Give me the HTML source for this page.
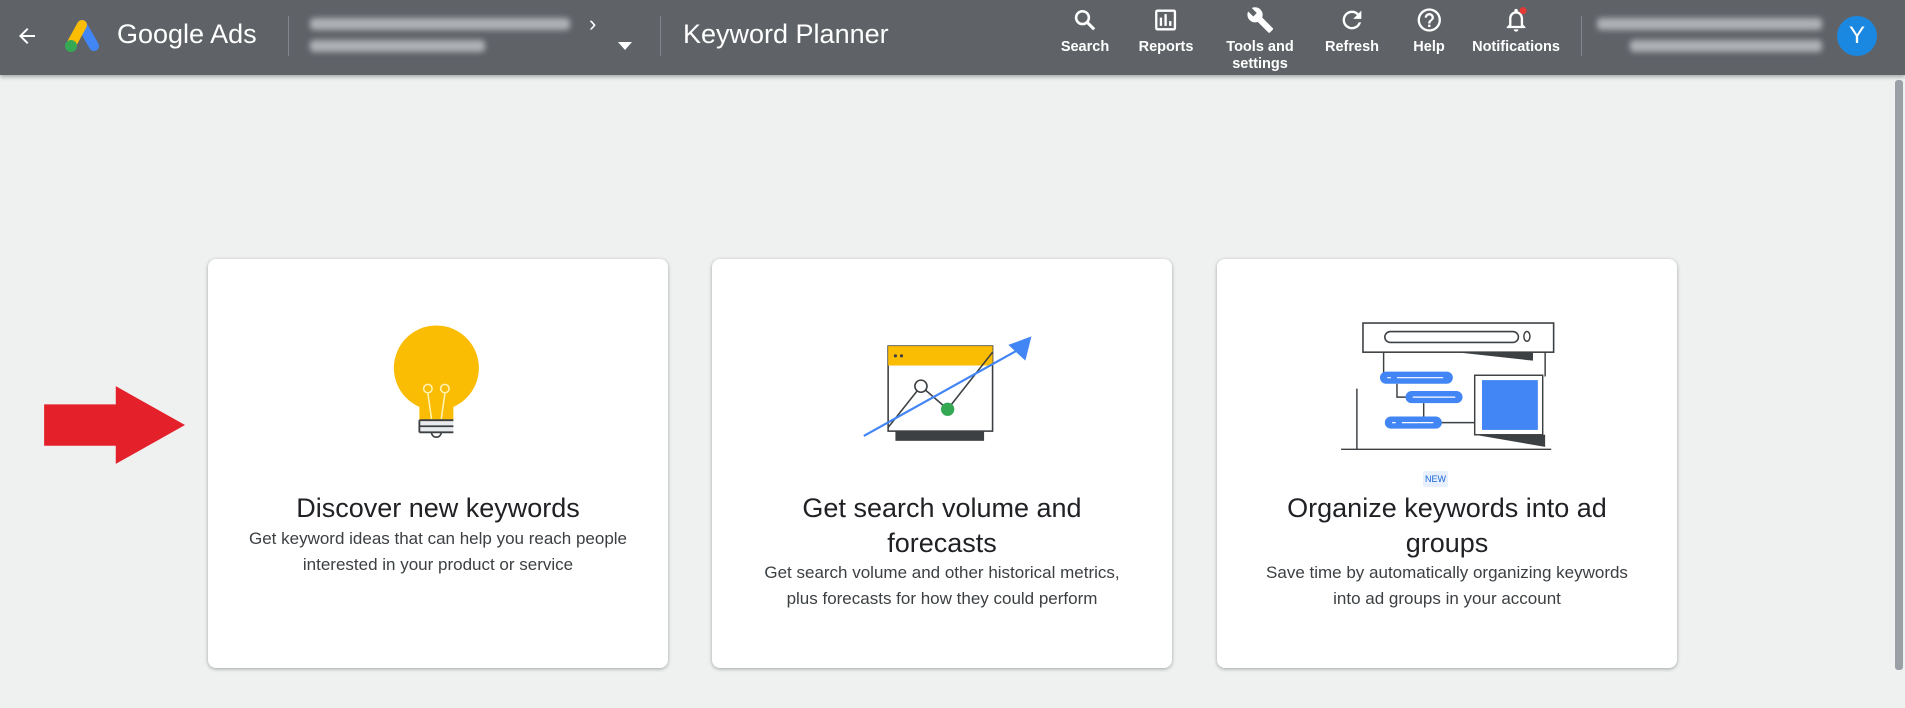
<!DOCTYPE html>
<html><head><meta charset="utf-8"><style>
*{margin:0;padding:0;box-sizing:border-box}
body{width:1905px;height:708px;overflow:hidden;background:#eff1f1;font-family:"Liberation Sans",Arial,sans-serif;position:relative}
.top{position:absolute;left:0;top:0;width:1905px;height:75px;background:#5f6368;box-shadow:0 2px 4px rgba(0,0,0,.3)}
.t{position:absolute;color:#fff;white-space:nowrap}
.sep{position:absolute;top:16px;width:1px;height:40px;background:#80868b}
.blur{position:absolute;height:12px;background:#aeb1b5;border-radius:4px;filter:blur(3px)}
.nav{position:absolute;top:6px;color:#fff;font-size:14.5px;font-weight:bold;text-align:center;line-height:17px;transform:translateX(-50%)}
.nav svg{display:block;margin:0 auto 5px}
.card{position:absolute;top:259px;width:460px;height:409px;background:#fff;border-radius:8px;box-shadow:0 1px 3px rgba(60,64,67,.3),0 1px 4px rgba(60,64,67,.15);text-align:center}
.card h2{position:absolute;left:0;right:0;top:232px;font-weight:400;font-size:27px;line-height:35px;color:#202124;padding:0 40px}
.card p{font-size:17px;line-height:25.5px;color:#3c4043;position:absolute;left:0;right:0;padding:0 20px;white-space:nowrap}
.badge{position:absolute;left:1423px;top:471px;width:25px;height:16px;background:#e8f0fe;color:#1967d2;font-size:9px;line-height:16px;text-align:center;border-radius:2px}
</style></head><body>
<div class="top">
<svg style="position:absolute;left:15px;top:24px" width="24" height="24" viewBox="0 0 24 24"><path d="M20 11H7.8l5.6-5.6L12 4l-8 8 8 8 1.4-1.4L7.8 13H20z" fill="#fff"/></svg>
<svg style="position:absolute;left:63px;top:18px" width="38" height="36" viewBox="0 0 38 36"><path d="M19 7L31 28" stroke="#4285f4" stroke-width="10" stroke-linecap="round"/><path d="M19 7L8 27" stroke="#fbbc04" stroke-width="10" stroke-linecap="round"/><circle cx="8" cy="28" r="6" fill="#34a853"/></svg>
<div class="t" style="left:117px;top:19px;font-size:27px">Google Ads</div>
<div class="sep" style="left:288px"></div>
<div class="blur" style="left:310px;top:18px;width:260px"></div>
<div class="blur" style="left:310px;top:40px;width:175px"></div>
<div class="t" style="left:589px;top:11px;font-size:22px">›</div>
<svg style="position:absolute;left:618px;top:42px" width="14" height="8"><path d="M0 0h14L7 8z" fill="#fff"/></svg>
<div class="sep" style="left:660px"></div>
<div class="t" style="left:683px;top:19px;font-size:27px">Keyword Planner</div>
<div class="nav" style="left:1085px"><svg width="28" height="28" viewBox="0 0 24 24"><circle cx="10" cy="10" r="5.5" fill="none" stroke="#fff" stroke-width="2.2"/><path d="M14 14L20 20" stroke="#fff" stroke-width="2.6"/></svg>Search</div>
<div class="nav" style="left:1166px"><svg width="28" height="28" viewBox="0 0 24 24"><path d="M19 3H5a2 2 0 0 0-2 2v14a2 2 0 0 0 2 2h14a2 2 0 0 0 2-2V5a2 2 0 0 0-2-2zm0 16H5V5h14zM7 10h2v7H7zm4-3h2v10h-2zm4 6h2v4h-2z" fill="#fff"/></svg>Reports</div>
<div class="nav" style="left:1260px"><svg width="28" height="28" viewBox="0 0 24 24"><path d="M22.7 19l-9.1-9.1c.9-2.3.4-5-1.5-6.9-2-2-5-2.4-7.4-1.3L9 6 6 9 1.6 4.7C.4 7.1.9 10.1 2.9 12.1c1.9 1.9 4.6 2.4 6.9 1.5l9.1 9.1c.4.4 1 .4 1.4 0l2.3-2.3c.5-.4.5-1.100.1-1.4z" fill="#fff"/></svg>Tools and<br>settings</div>
<div class="nav" style="left:1352px"><svg width="28" height="28" viewBox="0 0 24 24"><path d="M17.65 6.35A7.96 7.96 0 0 0 12 4a8 8 0 1 0 7.73 10h-2.08A6 6 0 1 1 12 6c1.66 0 3.14.69 4.22 1.78L13 11h7V4z" fill="#fff"/></svg>Refresh</div>
<div class="nav" style="left:1429px"><svg width="28" height="28" viewBox="0 0 24 24"><path d="M11 18h2v-2h-2zm1-16a10 10 0 1 0 0 20 10 10 0 0 0 0-20zm0 18a8 8 0 1 1 0-16 8 8 0 0 1 0 16zm0-14a4 4 0 0 0-4 4h2a2 2 0 1 1 4 0c0 2-3 1.75-3 5h2c0-2.25 3-2.5 3-5a4 4 0 0 0-4-4z" fill="#fff"/></svg>Help</div>
<div class="nav" style="left:1516px"><svg width="28" height="28" viewBox="0 0 24 24"><path d="M12 22a2 2 0 0 0 2-2h-4a2 2 0 0 0 2 2zm6-6v-5c0-3.07-1.640-5.640-4.5-6.32V4a1.5 1.5 0 0 0-3 0v.68C7.63 5.36 6 7.92 6 11v5l-2 2v1h16v-1zm-2 1H8v-6c0-2.48 1.51-4.5 4-4.5s4 2.02 4 4.5z" fill="#fff"/><circle cx="18" cy="4" r="3" fill="#e53935"/></svg>Notifications</div>
<div class="sep" style="left:1581px"></div>
<div class="blur" style="left:1597px;top:18px;width:225px"></div>
<div class="blur" style="left:1630px;top:40px;width:192px"></div>
<div style="position:absolute;left:1837px;top:16px;width:40px;height:40px;border-radius:50%;background:#1a88e0;color:#fff;font-size:24px;line-height:40px;text-align:center">Y</div>
</div>
<div style="position:absolute;left:1895px;top:80px;width:8px;height:590px;background:#9aa0a6;border-radius:3px"></div>

<div class="card" style="left:208px"><h2>Discover new keywords</h2><p style="top:267px">Get keyword ideas that can help you reach people<br>interested in your product or service</p></div>
<div class="card" style="left:712px"><h2>Get search volume and<br>forecasts</h2><p style="top:301px">Get search volume and other historical metrics,<br>plus forecasts for how they could perform</p></div>
<div class="card" style="left:1217px"><h2>Organize keywords into ad<br>groups</h2><p style="top:301px">Save time by automatically organizing keywords<br>into ad groups in your account</p></div>
<div class="badge">NEW</div>

<svg style="position:absolute;left:0;top:0" width="1905" height="708" viewBox="0 0 1568 583">
<path d="M36 333H95V318L152 350L95 382V367H36Z" fill="#e4202a"/>
<circle cx="359" cy="303" r="35" fill="#fbbc04"/>
<rect x="345" y="320" width="28" height="26" fill="#fbbc04"/>
<g stroke="#fff3b0" stroke-width="1.3" fill="none"><circle cx="352" cy="320" r="3.5"/><circle cx="366" cy="320" r="3.5"/><path d="M352 324L355 345M366 324L363 345"/></g>
<rect x="345" y="346" width="28" height="10" fill="#e8eaed"/>
<g stroke="#3c4043" stroke-width="1.5"><path d="M345 346H373M345 351H373M345 356H373M345 346V356"/></g>
<path d="M355 356a4 4 0 0 0 8 0" stroke="#3c4043" fill="none" stroke-width="1.3"/>
<rect x="737" y="355" width="73" height="8" fill="#3c4043"/>
<rect x="731" y="285" width="86" height="70" fill="#fff" stroke="#3c4043" stroke-width="1.3"/>
<rect x="731" y="285" width="86" height="16" fill="#fbbc04"/>
<circle cx="737" cy="293" r="1.3" fill="#3c4043"/><circle cx="742" cy="293" r="1.3" fill="#3c4043"/>
<path d="M731 352L758 318L780 337L817 290" stroke="#3c4043" stroke-width="1.3" fill="none"/>
<path d="M711 359L840 287" stroke="#4285f4" stroke-width="1.8"/>
<path d="M849 277L830 284L844 297Z" fill="#4285f4"/>
<circle cx="758" cy="318" r="5" fill="#fff" stroke="#3c4043" stroke-width="1.3"/>
<circle cx="780" cy="337" r="5.5" fill="#34a853"/>
<path d="M1198 290H1262V297Z" fill="#3c4043"/>
<rect x="1122" y="266" width="157" height="24" fill="#fff" stroke="#3c4043" stroke-width="1.3"/>
<rect x="1140" y="273" width="110" height="9" rx="4.5" fill="none" stroke="#3c4043" stroke-width="1.3"/>
<ellipse cx="1257" cy="277" rx="2.5" ry="4" fill="none" stroke="#3c4043" stroke-width="1.2"/>
<g stroke="#3c4043" stroke-width="1.2" fill="none"><path d="M1139 290V307M1272 290V310M1150 316V327H1157M1172 332V348H1187M1187 348H1214M1117 320V370M1104 370H1277"/></g>
<rect x="1136" y="306" width="60" height="10" rx="5" fill="#4285f4"/>
<rect x="1157" y="322" width="47" height="10" rx="5" fill="#4285f4"/>
<rect x="1140" y="343" width="47" height="10" rx="5" fill="#4285f4"/>
<g stroke="#fff" stroke-width="1"><path d="M1142 311H1145M1150 311H1188M1163 327H1198M1146 348H1149M1154 348H1180"/></g>
<path d="M1214 358H1272V368Z" fill="#3c4043"/>
<rect x="1214" y="309" width="56" height="49" fill="#fff" stroke="#3c4043" stroke-width="1.2"/>
<rect x="1220" y="313" width="46" height="41" fill="#4285f4"/>
</svg>
</body></html>
